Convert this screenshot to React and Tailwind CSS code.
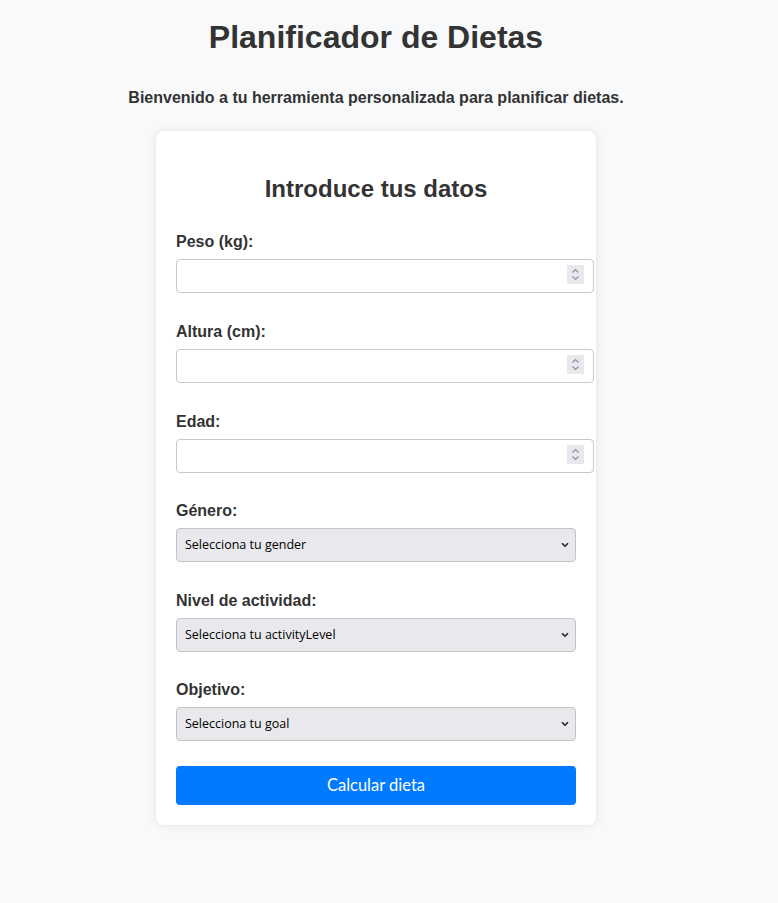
const FIELDS_NUM = [
  { id: 'weight', label: 'Peso (kg):' },
  { id: 'height', label: 'Altura (cm):' },
  { id: 'age', label: 'Edad:' },
];

const FIELDS_SEL = [
  { id: 'gender', label: 'Género:', gap: 'mb-[30px]' },
  { id: 'activityLevel', label: 'Nivel de actividad:', gap: 'mb-[29px]' },
  { id: 'goal', label: 'Objetivo:', gap: 'mb-[25px]' },
];

function Spinner() {
  return (
    <div className="absolute right-[10px] top-[6px] w-[17px] h-[19px] bg-[#e9e9ed] flex items-center justify-center">
      <svg width="9" height="13" viewBox="0 0 9 13" fill="none" stroke="#8f8f9d" strokeWidth="1.2">
        <path d="M1.5 4.5 L4.5 1.5 L7.5 4.5" />
        <path d="M1.5 8.5 L4.5 11.5 L7.5 8.5" />
      </svg>
    </div>
  );
}

function NumField({ label, last }) {
  return (
    <div className={last ? 'mb-[29px]' : 'mb-[30px]'}>
      <label className="block text-[16px] leading-[18px] font-bold mb-2">{label}</label>
      <div className="relative w-[418px]">
        <input
          type="text"
          className="block w-[418px] h-[34px] border border-[#c8c8c8] rounded-[4px] bg-white outline-none px-2"
        />
        <Spinner />
      </div>
    </div>
  );
}

function SelField({ id, label, gap }) {
  return (
    <div className={gap}>
      <label className="block text-[16px] leading-[18px] font-bold mb-2">{label}</label>
      <div className="relative w-[400px]">
        <select
          className="appearance-none block w-[400px] h-[34px] border border-[#c4c4c4] rounded-[4px] bg-[#e9e9ed] pl-2 text-[12.5px] text-black font-['Open_Sans',sans-serif] outline-none"
          defaultValue=""
        >
          <option value="">Selecciona tu {id}</option>
        </select>
        <svg className="absolute right-[7px] top-[14px] pointer-events-none" width="8" height="6" viewBox="0 0 8 6" fill="none" stroke="#222" strokeWidth="1.6">
          <path d="M1 1.2 L4 4.2 L7 1.2" />
        </svg>
      </div>
    </div>
  );
}

export default function App() {
  return (
    <div className="min-h-[903px] bg-[#f8f9fa] text-[#333] font-['Liberation_Sans',Arial,sans-serif]">
      <div className="w-[752px] flex flex-col items-center pt-[19px]">
        <h1 className="text-[32px] leading-[37px] font-bold">Planificador de Dietas</h1>
        <p className="text-[16px] leading-[18px] font-bold mt-[33px]">
          Bienvenido a tu herramienta personalizada para planificar dietas.
        </p>
        <div className="w-[440px] mt-[24px] bg-white rounded-[8px] shadow-[0_0_10px_rgba(0,0,0,0.1)] px-5 pt-5 pb-5">
          <h2 className="text-center text-[24px] leading-[28px] font-bold mt-[24px] mb-[30px]">Introduce tus datos</h2>
          {FIELDS_NUM.map((f, i) => <NumField key={f.id} label={f.label} last={i === FIELDS_NUM.length - 1} />)}
          {FIELDS_SEL.map(f => <SelField key={f.id} id={f.id} label={f.label} gap={f.gap} />)}
          <button className="block w-[400px] h-[39px] bg-[#007bff] text-white rounded-[4px] text-[16.5px] font-['Lato',sans-serif]">
            Calcular dieta
          </button>
        </div>
      </div>
    </div>
  );
}
